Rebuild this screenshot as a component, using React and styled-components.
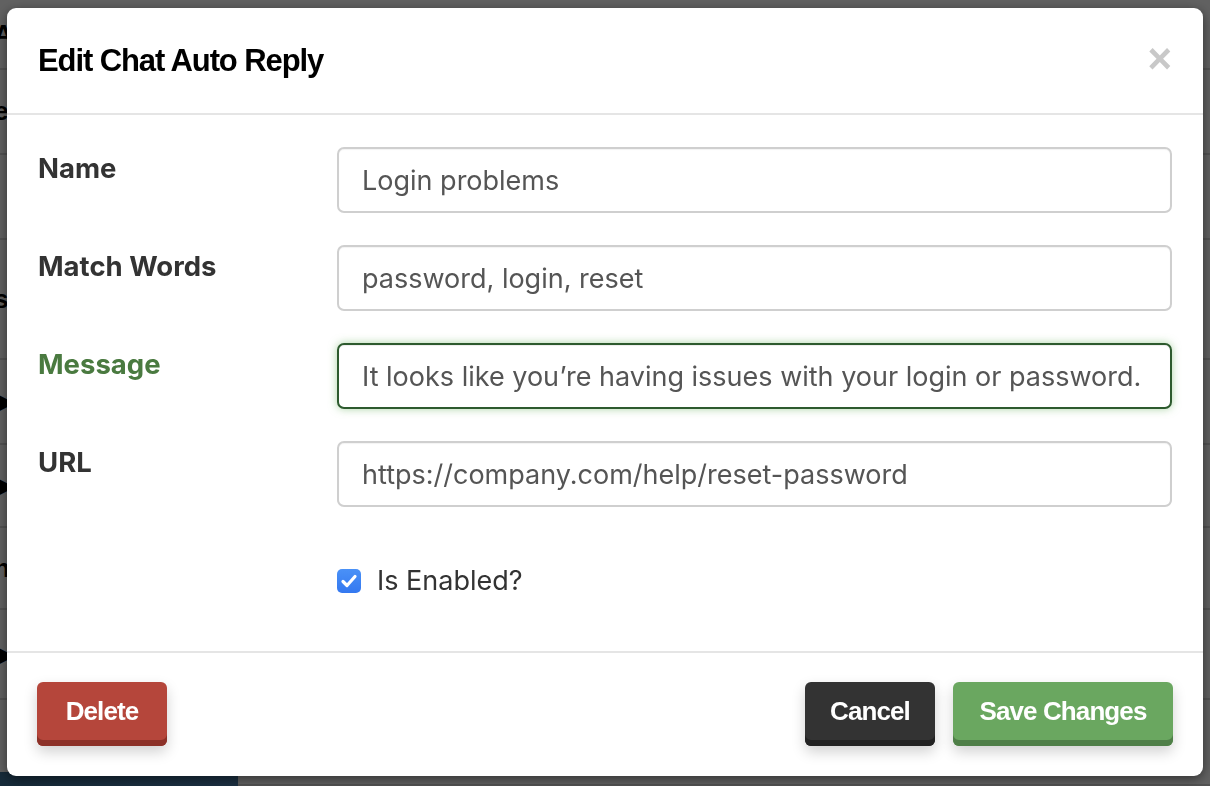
import React, { useState } from "react";
import styled, { createGlobalStyle } from "styled-components";

const GlobalStyle = createGlobalStyle`
  html, body {
    margin: 0;
    padding: 0;
    width: 1210px;
    height: 786px;
    overflow: hidden;
    background: #fff;
    font-family: "Inter", "Liberation Sans", sans-serif;
  }
  * { box-sizing: border-box; }
`;

const rows = [
  { h: 70, glyph: "A" },
  { h: 85, glyph: "e" },
  { h: 85, glyph: "" },
  { h: 120, glyph: "s" },
  { h: 85, glyph: "▶" },
  { h: 83, glyph: "▶" },
  { h: 82, glyph: "n" },
  { h: 90, glyph: "▶" },
  { h: 86, glyph: "" },
];

function Backdrop() {
  return (
    <Page>
      {rows.map((r, i) => (
        <PageRow key={i} $h={r.h}>
          <PageGlyph>{r.glyph}</PageGlyph>
        </PageRow>
      ))}
      <BlueBar />
    </Page>
  );
}

export default function App() {
  const [enabled, setEnabled] = useState(true);

  return (
    <>
      <GlobalStyle />
      <Backdrop />
      <Overlay>
        <Modal>
          <Header>
            <Title>Edit Chat Auto Reply</Title>
            <Close aria-label="Close">×</Close>
          </Header>
          <Body>
            <FieldRow>
              <Label>Name</Label>
              <Input defaultValue="Login problems" />
            </FieldRow>
            <FieldRow>
              <Label>Match Words</Label>
              <Input defaultValue="password, login, reset" />
            </FieldRow>
            <FieldRow>
              <Label $success>Message</Label>
              <Input $success defaultValue="It looks like you’re having issues with your login or password." />
            </FieldRow>
            <FieldRow>
              <Label>URL</Label>
              <Input defaultValue="https://company.com/help/reset-password" />
            </FieldRow>
            <CheckRow>
              <span />
              <CheckLabel>
                <Box $checked={enabled} onClick={() => setEnabled(!enabled)}>
                  {enabled && (
                    <svg width="22" height="22" viewBox="0 0 22 22">
                      <path
                        d="M5 11.5l4 4L17 6.5"
                        fill="none"
                        stroke="#fff"
                        strokeWidth="3.2"
                        strokeLinecap="round"
                        strokeLinejoin="round"
                      />
                    </svg>
                  )}
                </Box>
                Is Enabled?
              </CheckLabel>
            </CheckRow>
          </Body>
          <Footer>
            <Button $bg="#b5463b" $edge="#8c3128">Delete</Button>
            <FooterRight>
              <Button $bg="#333333" $edge="#232323">Cancel</Button>
              <Button $bg="#6aa760" $edge="#4f7f48" $wide>Save Changes</Button>
            </FooterRight>
          </Footer>
        </Modal>
      </Overlay>
    </>
  );
}

const Page = styled.div`
  width: 1210px;
  height: 786px;
  position: relative;
  background: #fff;
`;

const PageRow = styled.div`
  height: ${(p) => p.$h}px;
  border-bottom: 2px solid #d8d8d8;
  display: flex;
  align-items: center;
`;

const PageGlyph = styled.span`
  font-family: "Liberation Sans", sans-serif;
  font-weight: 700;
  font-size: 26px;
  color: #000;
  margin-left: -6px;
`;

const BlueBar = styled.div`
  position: absolute;
  left: 0;
  bottom: 0;
  width: 238px;
  height: 14px;
  background: linear-gradient(90deg, #3a6f96, #4a7fae);
`;

const Overlay = styled.div`
  position: fixed;
  inset: 0;
  background: rgba(0, 0, 0, 0.62);
  padding: 8px 7px 10px 7px;
`;

const Modal = styled.div`
  width: 1196px;
  height: 768px;
  background: #fff;
  border-radius: 9px;
  box-shadow: 0 3px 12px rgba(0, 0, 0, 0.5);
  display: flex;
  flex-direction: column;
  overflow: hidden;
`;

const Header = styled.div`
  height: 107px;
  border-bottom: 2px solid #e5e5e5;
  display: flex;
  align-items: center;
  justify-content: space-between;
  padding: 0 31px;
`;

const Title = styled.h4`
  margin: 0;
  margin-top: 1px;
  font-family: "Liberation Sans", "Open Sans", sans-serif;
  font-weight: 700;
  font-size: 31px;
  letter-spacing: -1.1px;
  color: #000;
`;

const Close = styled.button`
  border: 0;
  background: none;
  padding: 0;
  font-family: "Liberation Sans", sans-serif;
  font-weight: 700;
  font-size: 42px;
  line-height: 1;
  color: #c8c8c8;
  margin-top: -4px;
  cursor: pointer;
`;

const Body = styled.div`
  flex: 1;
  display: flex;
  flex-direction: column;
  gap: 32px;
  padding: 32px 31px 0 31px;
`;

const FieldRow = styled.div`
  display: grid;
  grid-template-columns: 299px 1fr;
  align-items: start;
`;

const Label = styled.label`
  padding-top: 5px;
  font-family: "Inter", sans-serif;
  font-weight: 700;
  font-size: 27.5px;
  line-height: 1.2;
  color: ${(p) => (p.$success ? "#4a7a40" : "#333")};
`;

const Input = styled.input`
  height: 66px;
  width: 100%;
  border: 2px solid ${(p) => (p.$success ? "#2d5a2e" : "#cfcfcf")};
  border-radius: 7px;
  padding: 0 23px;
  font-family: "Inter", sans-serif;
  font-size: 27px;
  color: #555;
  outline: none;
  box-shadow: ${(p) =>
    p.$success
      ? "inset 0 1px 1px rgba(0,0,0,.075), 0 0 8px rgba(103,177,92,0.55)"
      : "inset 0 1px 1px rgba(0,0,0,.05)"};
`;

const CheckRow = styled.div`
  display: grid;
  grid-template-columns: 299px 1fr;
  margin-top: 25px;
`;

const CheckLabel = styled.label`
  display: flex;
  align-items: center;
  gap: 16px;
  font-family: "Inter", sans-serif;
  font-size: 27px;
  color: #333;
  cursor: pointer;
`;

const Box = styled.span`
  width: 24px;
  height: 24px;
  border-radius: 5px;
  background: ${(p) => (p.$checked ? "linear-gradient(#4a91f7, #3478f0)" : "#fff")};
  border: ${(p) => (p.$checked ? "none" : "1px solid #999")};
  display: flex;
  align-items: center;
  justify-content: center;
`;

const Footer = styled.div`
  height: 125px;
  border-top: 2px solid #e5e5e5;
  display: flex;
  align-items: flex-start;
  justify-content: space-between;
  padding: 29px 30px 0 30px;
`;

const FooterRight = styled.div`
  display: flex;
  gap: 18px;
`;

const Button = styled.button`
  height: 64px;
  width: ${(p) => (p.$wide ? "220px" : "130px")};
  padding: 0 0 6px 0;
  border: 0;
  border-radius: 6px;
  background: ${(p) => p.$bg};
  box-shadow: inset 0 -6px 0 ${(p) => p.$edge}, 0 6px 14px rgba(0, 0, 0, 0.18);
  color: #fff;
  white-space: nowrap;
  font-family: "Liberation Sans", "Open Sans", sans-serif;
  font-weight: 700;
  font-size: 26px;
  letter-spacing: -0.9px;
  cursor: pointer;
`;
